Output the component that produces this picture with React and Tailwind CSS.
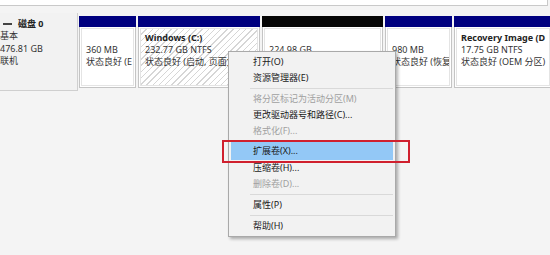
const font = { fontFamily: '"Noto Sans", "Noto Sans CJK SC", sans-serif' };

const partitions = [
  { w: "w-[57px]", head: "bg-[#00007f]", lines: ["", "360 MB", "状态良好 (E"] },
  {
    w: "w-[122px]",
    head: "bg-[#00007f]",
    title: "Windows  (C:)",
    lines: ["232.77 GB NTFS", "状态良好 (启动, 页面文件"],
    hatched: true,
  },
  { w: "w-[121px]", head: "bg-[#050505]", lines: ["", "224.98 GB"] },
  { w: "w-[67px]", head: "bg-[#00007f]", lines: ["", "980 MB", "状态良好 (恢复"] },
  {
    w: "w-[98px]",
    head: "bg-[#00007f]",
    title: "Recovery Image  (D",
    lines: ["17.75 GB NTFS", "状态良好 (OEM 分区)"],
  },
];

const menu = [
  { label: "打开(O)" },
  { label: "资源管理器(E)" },
  { sep: true },
  { label: "将分区标记为活动分区(M)", off: true },
  { label: "更改驱动器号和路径(C)..." },
  { label: "格式化(F)...", off: true },
  { gap: true },
  { label: "扩展卷(X)...", active: true },
  { label: "压缩卷(H)..." },
  { label: "删除卷(D)...", off: true },
  { sep: true },
  { label: "属性(P)" },
  { sep: true },
  { label: "帮助(H)" },
];

function Partition({ p }) {
  return (
    <div className={`${p.w} shrink-0 flex flex-col`}>
      <div className={`h-[11px] ${p.head}`} />
      <div className="h-[61px] border border-t-0 border-[#c4c4c4] bg-white p-[1px]">
        <div
          className={`h-full overflow-hidden border border-[#e4e4e4] pl-[4px] pt-[3px] ${
            p.hatched
              ? "bg-[repeating-linear-gradient(135deg,#ffffff_0px,#ffffff_3.4px,#d6d6d6_3.4px,#d6d6d6_4.4px)]"
              : ""
          }`}
        >
          {p.title ? (
            <div className="h-[12px] whitespace-nowrap text-[9px] font-bold leading-[12px] text-[#222]">
              {p.title}
            </div>
          ) : null}
          {p.lines.map((line, i) => (
            <div
              key={i}
              className="h-[12px] whitespace-nowrap text-[9px] leading-[12px] text-[#333]"
            >
              {line || "\u00a0"}
            </div>
          ))}
        </div>
      </div>
    </div>
  );
}

export default function App() {
  return (
    <div className="relative h-[255px] w-[550px] overflow-hidden bg-[#f4f4f4]" style={font}>
      <div className="h-[6px] w-[548px] border-b border-r border-[#c9c9c9] bg-white" />

      <div className="mt-[7px] flex">
        <div className="h-[78px] w-[78px] shrink-0 border-r border-b border-[#cfcfcf] bg-[#f2f2f2] pt-[4px]">
          <div className="flex h-[13px] items-center gap-[6px] pl-[3px]">
            <span className="h-[2px] w-[9px] bg-[#444]" />
            <span className="text-[9px] font-bold leading-[13px] text-[#222]">磁盘 0</span>
          </div>
          <div className="text-[9px] leading-[12.5px] text-[#333]">基本</div>
          <div className="text-[9px] leading-[12.5px] text-[#333]">476.81 GB</div>
          <div className="text-[9px] leading-[12.5px] text-[#333]">联机</div>
        </div>

        <div className="ml-[1px] mt-[3px] flex gap-[2px]">
          {partitions.map((p, i) => (
            <Partition key={i} p={p} />
          ))}
        </div>
      </div>

      <div className="absolute left-[228px] top-[51px] w-[168px] border border-[#a9a9a9] bg-[#f2f2f2] pb-[2px] pt-[2px] shadow-[2px_2px_3px_rgba(0,0,0,0.3)]">
        {menu.map((m, i) => {
          if (m.sep) {
            return (
              <div key={i} className="flex h-[5px] items-center pl-[21px] pr-[2px]">
                <div className="h-[1px] w-full bg-[#d9d9d9]" />
              </div>
            );
          }
          if (m.gap) {
            return <div key={i} className="h-[3px]" />;
          }
          return (
            <div
              key={i}
              className={`flex items-center whitespace-nowrap text-[9px] ${
                m.active
                  ? "mx-[2px] h-[18px] bg-[#93c8f6] pl-[22px] text-[#1a1a1a]"
                  : `h-[16px] pl-[24px] ${m.off ? "text-[#a0a0a0]" : "text-[#1a1a1a]"}`
              }`}
            >
              {m.label}
            </div>
          );
        })}
      </div>

      <div className="absolute left-[222px] top-[140px] h-[23px] w-[188px] border-2 border-[#d0202e]" />
    </div>
  );
}
